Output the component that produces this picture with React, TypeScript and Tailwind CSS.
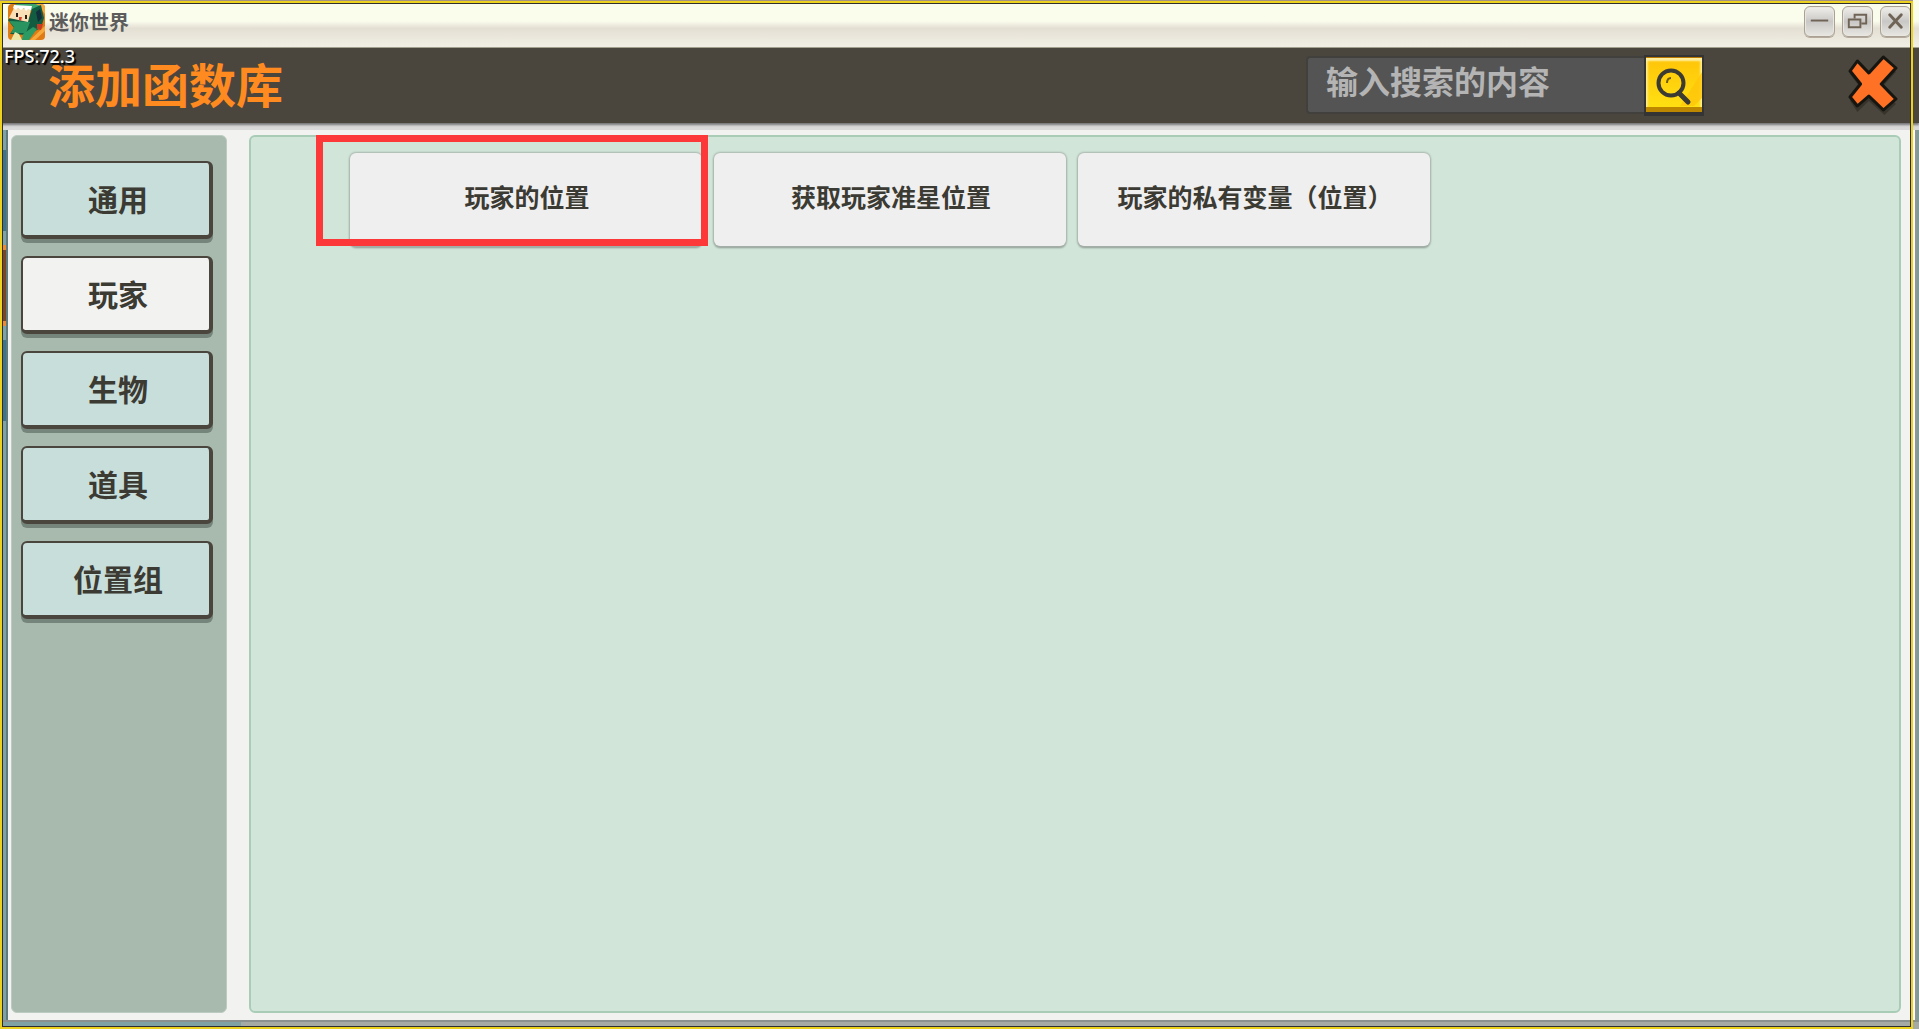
import { useState } from 'react';
import clsx from 'clsx';

const categories = ['通用', '玩家', '生物', '道具', '位置组'];

const functionsByCategory: Record<string, string[]> = {
  玩家: ['玩家的位置', '获取玩家准星位置', '玩家的私有变量（位置）'],
};

const AppIcon = () => (
  <svg viewBox="0 0 37 36" className="h-9 w-[37px] shrink-0" aria-hidden="true">
    <defs>
      <clipPath id="app-icon">
        <rect width="37" height="36" rx="4" />
      </clipPath>
    </defs>
    <g clipPath="url(#app-icon)">
      <rect width="37" height="36" fill="#e07a14" />
      <path d="M28 0h9v10zM22 36l15-14v5L27 36z" fill="#f6a93a" />
      <path d="M5 2 9 0h18l6 2-8 5z" fill="#3aa56c" />
      <path d="M24 5l9-4 3 13-3 10-14 7-17-1 4-6-6-8 2-2 18 3z" fill="#125c41" />
      <path d="M1 17l21 1-4 11-15 0 3-6z" fill="#2a9460" />
      <path d="M6 4l17 1-3 13-19-4z" fill="#f8dfb6" />
      <path d="M6 1l18 1-1 4-3-1-2 2-2-3-3 2-3-2-2 2-3-2z" fill="#fff" />
      <path d="M8 9h2v4H8zM17 11h2v4h-2z" fill="#2c1c14" />
      <path d="M11 13l3 0-1 4-2-1z" fill="#d9402c" />
      <path d="M3 36l4-8 4 2 3 6z" fill="#eee6a4" />
      <path d="M28 8l4-3 2 9-4 4z" fill="#132f3c" />
      <path d="M29 20l6 0-2 6-4-1z" fill="#c93c24" />
      <path d="M15 30l10-7 4 2-8 11h-7z" fill="#2c9a63" />
    </g>
  </svg>
);

const SearchIcon = () => (
  <svg viewBox="0 0 56 54" className="h-full w-full" aria-hidden="true">
    <path d="M34 48 56 14v26l-8 8z" fill="#ffc60a" opacity="0.8" />
    <ellipse cx="25" cy="25" rx="12.5" ry="12.5" fill="none" stroke="#3b3a33" strokeWidth="4" />
    <path d="M33 35l9 9" stroke="#3b3a33" strokeWidth="5" strokeLinecap="round" />
    <path d="M21 25q0-5 4-5" fill="none" stroke="#6c5b12" strokeWidth="2" />
  </svg>
);

const CloseIcon = () => (
  <svg viewBox="0 0 48 60" preserveAspectRatio="none" className="h-[60px] w-[50px]" aria-hidden="true">
    <path d="M9 7l11 11L35 3l11 11-14 16 14 16-11 11-15-14L9 54 2 43l10-13L2 16z" fill="#2b2822" transform="translate(0 3)" opacity="0.6" />
    <path
      d="M9 6 20 18 34 2 46 13 32 29 46 44 34 55 20 41 9 51 2 42 12 29 2 16z"
      fill="#ff7125"
      stroke="#171510"
      strokeWidth="3"
      strokeLinejoin="round"
    />
  </svg>
);

const windowControls = [
  { label: '最小化', icon: <path d="M6 14h18" strokeWidth="2" /> },
  {
    label: '还原',
    icon: (
      <g strokeWidth="2">
        <path d="M6 13h12v8H6z" />
        <path d="M12 12V8h12v9h-5" />
      </g>
    ),
  },
  { label: '关闭', icon: <path d="M9 8l12 13M21 8L9 21" strokeWidth="3" strokeLinecap="round" /> },
];

const TitleBar = () => (
  <div className="flex h-12 shrink-0 items-center gap-1 border-b border-[#a3a291] bg-linear-to-b from-[#fafcec] from-45% via-[#e4dfd3] via-60% to-[#f1efe5] pl-2 pr-2 pb-1">
    <AppIcon />
    <span className="text-[20px] leading-6 font-bold text-[#5c5c5c]">迷你世界</span>
    <div className="ml-auto flex gap-[7px]">
      {windowControls.map(({ label, icon }) => (
        <button
          key={label}
          type="button"
          aria-label={label}
          className="h-[31px] w-[31px] rounded-md border border-[#a9a195] bg-linear-to-b from-[#f1efea] via-[#c9c8c6] to-[#e9e7e2] shadow-[inset_0_0_0_1px_#e9e7e0,0_1px_0_#b5aa9c]"
        >
          <svg viewBox="0 0 30 30" fill="none" stroke="#6f6456" className="h-full w-full">
            {icon}
          </svg>
        </button>
      ))}
    </div>
  </div>
);

const Header = ({ query, onSearch }: { query: string; onSearch: (value: string) => void }) => (
  <header className="relative z-10 flex h-[75px] shrink-0 items-center bg-[#4a463e] pb-px pl-12 pr-[21px] shadow-[0_2px_2px_#77777a,0_7px_0_#d9d9d9]">
    <span className="absolute left-1 top-0 text-[18px] leading-4 font-medium text-white font-['Noto_Sans'] [text-shadow:1px_1px_1px_#000,2px_2px_1px_#000]">
      FPS:72.3
    </span>
    <h1 className="pb-1 text-[47px] leading-[48px] font-bold text-[#ff8a1f]">添加函数库</h1>
    <form className="ml-auto flex items-center" onSubmit={(e) => e.preventDefault()}>
      <input
        type="text"
        aria-label="搜索"
        placeholder="输入搜索的内容"
        value={query}
        onChange={(e) => onSearch(e.target.value)}
        className="h-[58px] w-[338px] rounded-l-sm border-2 border-r-0 border-[#41403d] bg-[#545454] pl-[18px] pb-2.5 text-[32px] font-bold text-[#b4b4b4] outline-none placeholder:text-[#b4b4b4]"
      />
      <button
        type="submit"
        aria-label="搜索"
        className="h-[61px] w-[60px] border-2 border-b-4 border-[#343435] bg-[#ffdc10]"
      >
        <span className="block h-full w-full border-t border-[#b87800] bg-linear-to-b from-[#ffc408] to-[#ffe313] shadow-[inset_0_-5px_0_#bd8700,inset_0_3px_2px_#fff0a0,inset_2px_0_2px_#ffe97a,inset_-2px_0_2px_#ffe97a]">
          <SearchIcon />
        </span>
      </button>
    </form>
    <button type="button" aria-label="关闭函数库" className="ml-36">
      <CloseIcon />
    </button>
  </header>
);

/* Slice of the editor that shows beside the dialog */
const Backdrop = () => (
  <div className="flex w-2 shrink-0 flex-col border-r-2 border-[#5f7a7c] bg-[#7fa3a5] pt-[27px]">
    <div className="h-[81px] bg-[#3d7488]" />
    <div className="mt-[14px] h-[81px] border-y-[5px] border-[#f08a30] bg-[#7b4423]" />
    <div className="mt-[14px] h-[81px] bg-[#3d7488]" />
  </div>
);

export default function App() {
  const [active, setActive] = useState('玩家');
  const [query, setQuery] = useState('');
  const items = (functionsByCategory[active] ?? []).filter((name) => name.includes(query));

  return (
    <div className="relative flex h-screen min-h-[640px] flex-col overflow-hidden bg-[#a5aaa4] font-['Noto_Sans_CJK_SC',sans-serif]">
      <TitleBar />
      <Header query={query} onSearch={setQuery} />

      <div className="flex min-h-0 flex-1">
        <Backdrop />
        <main className="flex min-w-0 flex-1 gap-[22px] border-r-2 border-[#fafafa] bg-[#f2f2f1] pl-[3px] pr-3 pt-3 pb-[7px]">
          <nav className="flex w-[216px] shrink-0 flex-col gap-[17px] rounded-md border border-[#bccbc2] bg-[#a8baae] pl-[9px] pt-[25px]">
            {categories.map((name) => (
              <button
                key={name}
                type="button"
                onClick={() => setActive(name)}
                className={clsx(
                  'h-[78px] w-48 shrink-0 rounded-md border-2 border-r-4 border-b-4 border-[#4a463e] pb-0.5 pl-1 text-[30px] font-bold text-[#3b3a33] shadow-[0_4px_0_#76857b]',
                  name === active ? 'bg-[#f2f2f1]' : 'bg-[#c8dedb]',
                )}
              >
                {name}
              </button>
            ))}
          </nav>

          <section className="min-w-0 flex-1 rounded-md border-2 border-[#a9ccb7] bg-[#d1e6d9] pl-[99px] pt-4">
            <div className="flex flex-wrap gap-3">
              {items.map((name) => (
                <div key={name} className="relative">
                  <button
                    type="button"
                    className="h-[93px] w-[352px] rounded-md bg-[#efefef] pb-1.5 pl-0.5 text-[25px] font-bold text-[#3b3a33] shadow-[0_0_2px_1px_#a9b5ad,0_2px_2px_#8f9993]"
                  >
                    {name}
                  </button>
                  {name === '玩家的位置' && (
                    <div className="pointer-events-none absolute -left-[34px] -right-[6px] -top-[18px] bottom-0 border-7 border-[#fc3838]" />
                  )}
                </div>
              ))}
            </div>
          </section>
        </main>
        <div className="w-1 shrink-0 border-l-2 border-[#8f9694] bg-[#7d9c98]" />
      </div>

      <div className="flex h-[9px] shrink-0 border-t-2 border-[#8a918f]">
        <div className="w-[241px] bg-[#7fa3a5]" />
      </div>

      <div className="pointer-events-none absolute top-0 right-[6px] bottom-0 left-0 z-20 border-t border-[#a29284]">
        <div className="h-full border-2 border-[#ecd11f]">
          <div className="h-full border border-[#2e2e30]" />
        </div>
      </div>
    </div>
  );
}
